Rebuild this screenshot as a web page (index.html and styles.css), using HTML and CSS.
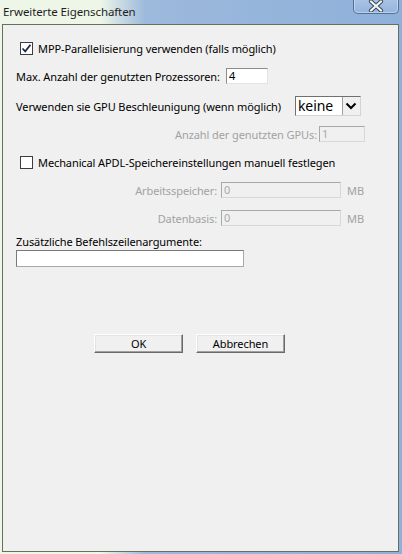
FILE: index.html
```html
<!DOCTYPE html>
<html lang="de">
<head>
  <meta charset="UTF-8">
  <title>Erweiterte Eigenschaften</title>
  <link rel="stylesheet" href="styles.css">
</head>
<body>

  <div class="window">
    <!-- Titelleiste -->
    <div class="titlebar">
      <span class="title">Erweiterte Eigenschaften</span>
      <div class="close-btn">
        <svg width="16" height="12" viewBox="0 0 16 12">
          <path d="M3 1.5 L13 10.5 M13 1.5 L3 10.5" stroke="#3c4a5c" stroke-width="4.2" stroke-linecap="round"/>
          <path d="M3 1.5 L13 10.5 M13 1.5 L3 10.5" stroke="#f4f6f8" stroke-width="2.2" stroke-linecap="round"/>
        </svg>
      </div>
    </div>

    <!-- Dialoginhalt -->
    <div class="client">
      <div class="row">
        <span class="checkbox checked">
          <svg width="11" height="11" viewBox="0 0 11 11">
            <path d="M1.5 5.5 L4.2 8.3 L9.5 1.8" fill="none" stroke="#1c2a4a" stroke-width="1.8"/>
          </svg>
        </span>
        <span>MPP-Parallelisierung verwenden (falls möglich)</span>
      </div>

      <div class="row">
        <span>Max. Anzahl der genutzten Prozessoren:</span>
        <span class="textbox procs">4</span>
      </div>

      <div class="row row-gpu">
        <span>Verwenden sie GPU Beschleunigung (wenn möglich)</span>
        <span class="combo">
          <span class="combo-text">keine</span>
          <span class="combo-btn">
            <svg width="12" height="8" viewBox="0 0 12 8">
              <path d="M1.5 1.5 L6 6 L10.5 1.5" fill="none" stroke="#000" stroke-width="2"/>
            </svg>
          </span>
        </span>
      </div>

      <div class="row">
        <span class="label-right gpus disabled">Anzahl der genutzten GPUs:</span>
        <span class="textbox off gpu-count">1</span>
      </div>

      <div class="row">
        <span class="checkbox"></span>
        <span>Mechanical APDL-Speichereinstellungen manuell festlegen</span>
      </div>

      <div class="row">
        <span class="label-right mem disabled">Arbeitsspeicher:</span>
        <span class="textbox off mem-box">0</span>
        <span class="unit disabled">MB</span>
      </div>

      <div class="row">
        <span class="label-right mem disabled">Datenbasis:</span>
        <span class="textbox off mem-box">0</span>
        <span class="unit disabled">MB</span>
      </div>

      <div class="args">
        <div class="args-label">Zusätzliche Befehlszeilenargumente:</div>
        <span class="textbox args-box"></span>
      </div>

      <div class="buttons">
        <span class="button">OK</span>
        <span class="button">Abbrechen</span>
      </div>
    </div>
  </div>

</body>
</html>
```

FILE: styles.css
```css
html, body {
  margin: 0;
  height: 100%;
}
body {
  font-family: 'Noto Sans', 'DejaVu Sans', sans-serif;
  font-size: 11px;
  letter-spacing: -0.1px;
  color: #000;
  background: #e9f3e4;
}
.window {
  height: 100%;
  display: flex;
  flex-direction: column;
  background: linear-gradient(90deg, #eef6e8 0, #eef6e8 100px, #9db9dc 145px, #8eb0d9 100%);
}

/* Titelleiste */
.titlebar {
  height: 24px;
  display: flex;
  align-items: flex-start;
  justify-content: space-between;
}
.title {
  padding: 4px 0 0 3px;
  color: #1e1e1e;
  font-size: 11.5px;
}
.close-btn {
  width: 44px;
  height: 14px;
  margin: -1px 3px 0 0;
  border: 1px solid #52719a;
  border-top: none;
  border-radius: 0 0 5px 5px;
  background: linear-gradient(#a9c3e2, #95b4dc);
  box-shadow: inset 0 0 0 1px rgba(255, 255, 255, 0.35);
  display: flex;
  align-items: center;
  justify-content: center;
}

/* Inhalt */
.client {
  flex: 1;
  margin: 0 3px 2px 2px;
  border: 1px solid #66705f;
  background: #f0f0f0;
  padding: 9px 0 0 13px;
}
.row {
  height: 28px;
  display: flex;
  align-items: center;
}
.row-gpu {
  margin-top: 2px;
}
.disabled {
  color: #a2a2a2;
}
.checkbox {
  width: 11px;
  height: 11px;
  border: 1px solid #3d3d3d;
  background: #fff;
  margin: 0 5px 0 4px;
  display: inline-flex;
  align-items: center;
  justify-content: center;
}
.textbox {
  height: 14px;
  line-height: 14px;
  padding: 0 2px;
  background: #fff;
  border: 1px solid #e3e3e3;
  border-top-color: #8c8c8c;
  border-left-color: #8c8c8c;
  box-sizing: content-box;
}
.textbox.off {
  background: #f0f0f0;
  color: #a8a8a8;
  border-color: #d8d8d8;
  border-top-color: #a8a8a8;
  border-left-color: #a8a8a8;
}
.procs {
  width: 36px;
  margin-left: 6px;
}
.combo {
  display: flex;
  height: 20px;
  width: 66px;
  margin-left: 14px;
  background: #fff;
  border: 1px solid #d4d4d4;
  border-top-color: #707070;
  border-left-color: #707070;
  box-sizing: border-box;
}
.combo-text {
  flex: 1;
  font-size: 14px;
  line-height: 17px;
  padding-left: 2px;
}
.combo-btn {
  width: 17px;
  background: #f0f0f0;
  border-left: 1px solid #a0a0a0;
  display: flex;
  align-items: center;
  justify-content: center;
}
.label-right {
  text-align: right;
}
.gpus {
  width: 301px;
}
.gpu-count {
  width: 40px;
  margin-left: 2px;
}
.mem {
  width: 201px;
}
.mem-box {
  width: 114px;
  margin-left: 4px;
}
.unit {
  margin-left: 6px;
}
.args {
  margin-top: 3px;
}
.args-label {
  line-height: 14px;
}
.args-box {
  display: block;
  width: 222px;
  height: 15px;
  margin-top: 1px;
  border-color: #a8a8a8;
  border-top-color: #7a7a7a;
  border-left-color: #7a7a7a;
}

/* Schaltflächen */
.buttons {
  display: flex;
  gap: 13px;
  margin: 67px 0 0 78px;
}
.button {
  width: 87px;
  height: 17px;
  line-height: 17px;
  text-align: center;
  background: #f0f0f0;
  border: 1px solid #6a6a6a;
  border-top-color: #fff;
  border-left-color: #fff;
  box-shadow: inset -1px -1px 0 #a0a0a0, inset 1px 1px 0 #e3e3e3;
}
```
